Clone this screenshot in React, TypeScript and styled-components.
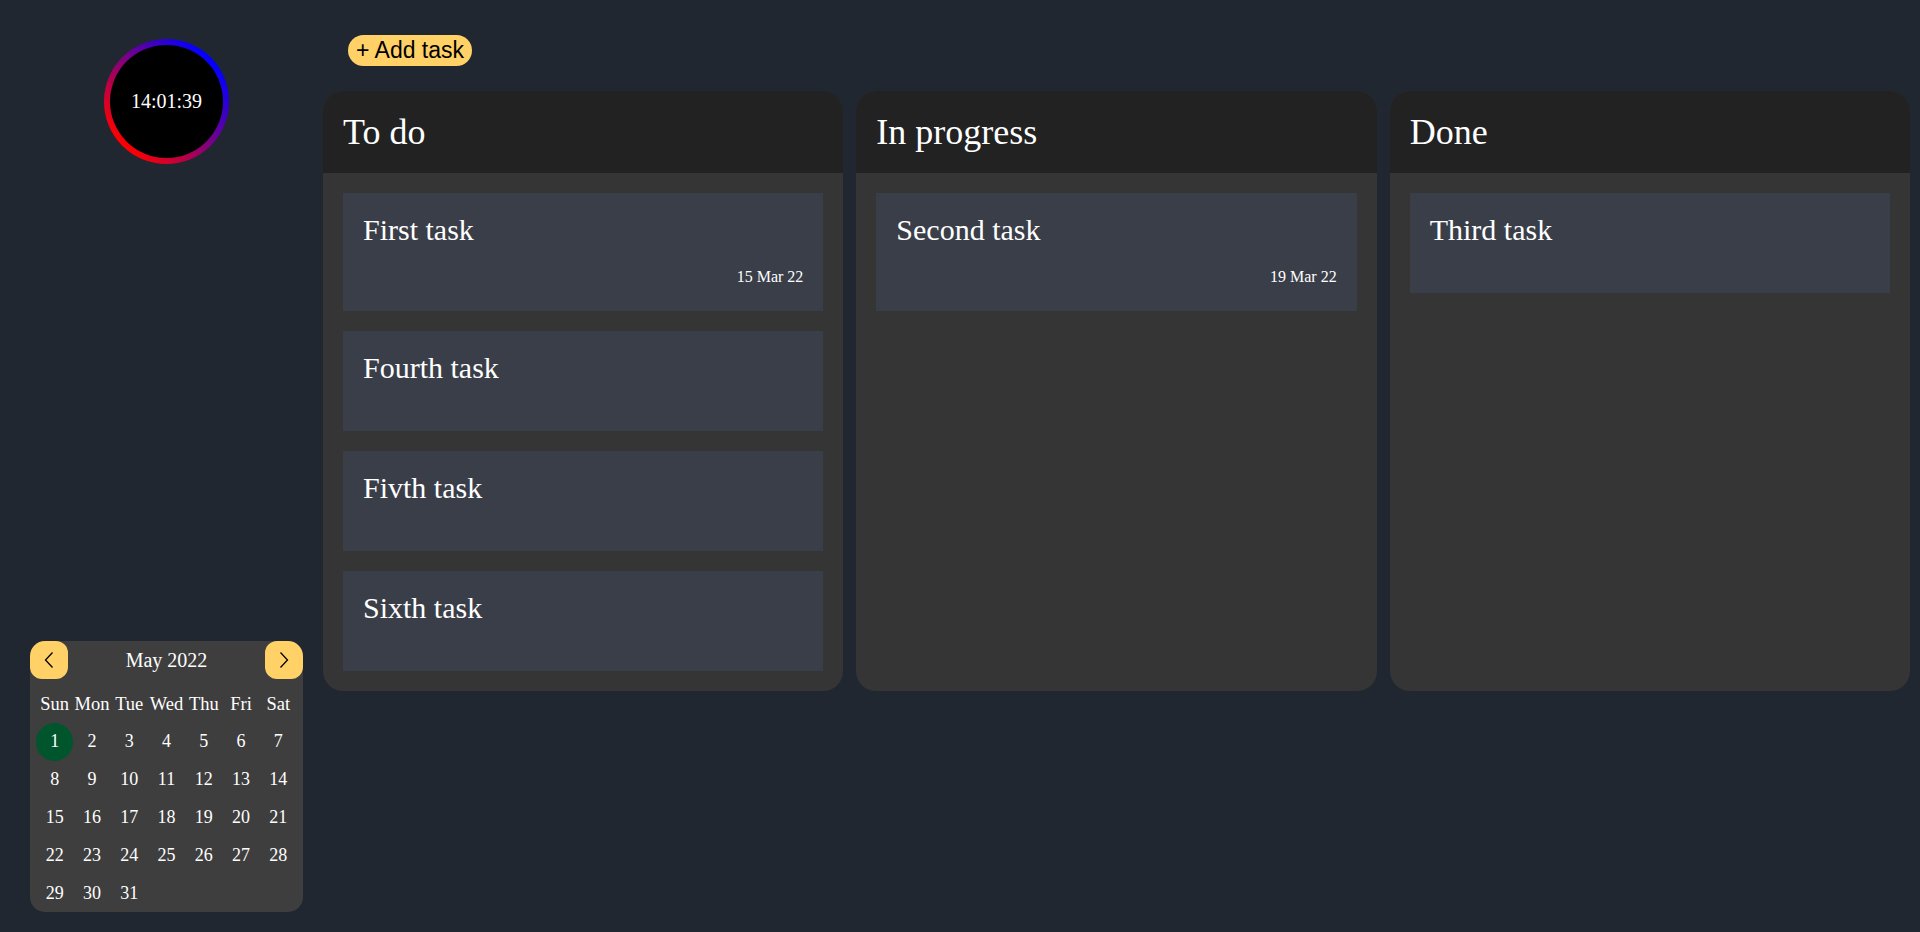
import React from "react";
import styled, { createGlobalStyle } from "styled-components";

const GlobalStyle = createGlobalStyle`
  html, body {
    margin: 0;
    padding: 0;
    background: #212731;
  }
  body {
    font-family: "Liberation Serif", "Times New Roman", serif;
    color: #ffffff;
  }
  *, *::before, *::after {
    box-sizing: border-box;
  }
`;

const Page = styled.div`
  display: flex;
  min-height: 100vh;
`;

const Sidebar = styled.aside`
  width: 323px;
  flex-shrink: 0;
  height: 100vh;
  padding: 39px 0 20px 10px;
  display: flex;
  flex-direction: column;
  align-items: center;
  justify-content: space-between;
`;

const ClockRing = styled.div`
  width: 125px;
  height: 125px;
  border-radius: 50%;
  padding: 6px;
  background: linear-gradient(45deg, #ff0000 15%, #0000ff 85%);
`;

const ClockFace = styled.div`
  width: 100%;
  height: 100%;
  border-radius: 50%;
  background: #000000;
  display: flex;
  align-items: center;
  justify-content: center;
  font-size: 20px;
  color: #ffffff;
`;

const Calendar = styled.div`
  width: 273px;
  background: #3e3e3e;
  border-radius: 15px;
  overflow: hidden;
`;

const CalHeader = styled.div`
  display: flex;
  align-items: center;
  justify-content: space-between;
  height: 38px;
  margin-bottom: 6px;
`;

const CalTitle = styled.div`
  font-size: 20px;
  color: #ffffff;
`;

const NavButton = styled.button`
  width: 38px;
  height: 38px;
  border: none;
  padding: 0;
  background: #ffd166;
  border-radius: 12px;
  display: flex;
  align-items: center;
  justify-content: center;
  cursor: pointer;
`;

const CalGrid = styled.div`
  display: grid;
  grid-template-columns: repeat(7, 1fr);
  grid-auto-rows: 37.8px;
  padding: 0 6px;
`;

const CalCell = styled.div<{ $today?: boolean }>`
  display: flex;
  align-items: center;
  justify-content: center;
  font-size: 18px;
  color: #ffffff;
  border-radius: 50%;
  background: ${(p) => (p.$today ? "#00552d" : "transparent")};
  width: ${(p) => (p.$today ? "37.3px" : "auto")};
  height: ${(p) => (p.$today ? "37.3px" : "auto")};
  align-self: center;
  justify-self: ${(p) => (p.$today ? "center" : "stretch")};
`;

const WeekdayCell = styled(CalCell)`
  font-size: 18.5px;
`;

const Main = styled.main`
  flex: 1;
  padding: 35px 10px 20px 0;
`;

const Toolbar = styled.div`
  padding-left: 25px;
  margin-bottom: 25px;
  display: flex;
`;

const AddButton = styled.button`
  font-family: "Liberation Sans", Arial, sans-serif;
  font-size: 23px;
  line-height: 27px;
  color: #000000;
  background: #ffd166;
  border: none;
  border-radius: 16px;
  padding: 2px 8px;
  cursor: pointer;
`;

const Board = styled.div`
  display: grid;
  grid-template-columns: repeat(3, 1fr);
  gap: 13px;
  align-items: stretch;
`;

const Column = styled.section`
  background: #353535;
  border-radius: 20px;
  overflow: hidden;
  display: flex;
  flex-direction: column;
`;

const ColumnHeader = styled.header`
  background: #222222;
  padding: 21px 20px;
`;

const ColumnTitle = styled.h2`
  margin: 0;
  font-size: 36px;
  font-weight: normal;
  line-height: 40px;
`;

const ColumnBody = styled.div`
  flex: 1;
  padding: 20px;
  display: flex;
  flex-direction: column;
  gap: 20px;
`;

const Card = styled.article`
  background: #3a3e48;
  min-height: 100px;
  padding: 20px 20px 0;
`;

const CardTitle = styled.h3`
  margin: 0;
  font-size: 30px;
  font-weight: normal;
  line-height: 33px;
`;

const CardDate = styled.div`
  text-align: right;
  font-size: 16px;
  line-height: 18px;
  padding: 22px 0 25px;
`;

type Task = { title: string; date?: string };

const columns: { title: string; tasks: Task[] }[] = [
  {
    title: "To do",
    tasks: [
      { title: "First task", date: "15 Mar 22" },
      { title: "Fourth task" },
      { title: "Fivth task" },
      { title: "Sixth task" },
    ],
  },
  { title: "In progress", tasks: [{ title: "Second task", date: "19 Mar 22" }] },
  { title: "Done", tasks: [{ title: "Third task" }] },
];

const weekdays = ["Sun", "Mon", "Tue", "Wed", "Thu", "Fri", "Sat"];
const days = Array.from({ length: 31 }, (_, i) => i + 1);

const Chevron = ({ dir }: { dir: "left" | "right" }) => (
  <svg width="10" height="16" viewBox="0 0 10 16" fill="none">
    <path
      d={dir === "left" ? "M8.5 0.5 L1.5 8 L8.5 15.5" : "M1.5 0.5 L8.5 8 L1.5 15.5"}
      stroke="#000"
      strokeWidth="1.3"
    />
  </svg>
);

export default function App() {
  return (
    <>
      <GlobalStyle />
      <Page>
        <Sidebar>
          <ClockRing>
            <ClockFace>14:01:39</ClockFace>
          </ClockRing>
          <Calendar>
            <CalHeader>
              <NavButton aria-label="previous month">
                <Chevron dir="left" />
              </NavButton>
              <CalTitle>May 2022</CalTitle>
              <NavButton aria-label="next month">
                <Chevron dir="right" />
              </NavButton>
            </CalHeader>
            <CalGrid>
              {weekdays.map((d) => (
                <WeekdayCell key={d}>{d}</WeekdayCell>
              ))}
              {days.map((d) => (
                <CalCell key={d} $today={d === 1}>
                  {d}
                </CalCell>
              ))}
            </CalGrid>
          </Calendar>
        </Sidebar>
        <Main>
          <Toolbar>
            <AddButton>+ Add task</AddButton>
          </Toolbar>
          <Board>
            {columns.map((col) => (
              <Column key={col.title}>
                <ColumnHeader>
                  <ColumnTitle>{col.title}</ColumnTitle>
                </ColumnHeader>
                <ColumnBody>
                  {col.tasks.map((t) => (
                    <Card key={t.title}>
                      <CardTitle>{t.title}</CardTitle>
                      {t.date && <CardDate>{t.date}</CardDate>}
                    </Card>
                  ))}
                </ColumnBody>
              </Column>
            ))}
          </Board>
        </Main>
      </Page>
    </>
  );
}
